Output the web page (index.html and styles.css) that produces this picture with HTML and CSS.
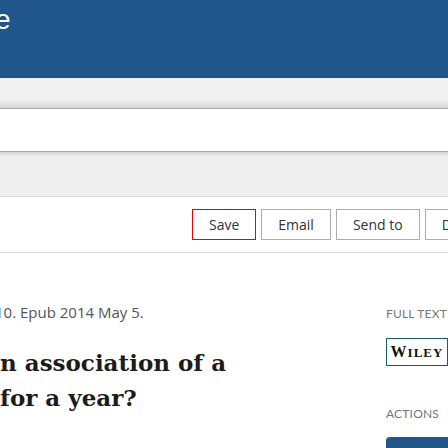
FILE: index.html
```html
<!DOCTYPE html>
<html lang="en">
<head>
<meta charset="utf-8">
<title>Article</title>
<link rel="stylesheet" href="styles.css">
</head>
<body>
<header class="masthead"><span class="brand">e</span></header>
<div class="searchbar"></div>
<div class="toolbar"></div>
<div class="actions-row">
  <button class="btn btn-active">Save</button>
  <button class="btn">Email</button>
  <button class="btn">Send to</button>
  <button class="btn">Display options</button>
</div>
<hr class="rule">
<main class="content">
  <article class="main-col">
    <p class="citation">10. Epub 2014 May 5.</p>
    <h1 class="title">n association of a<br>for a year?</h1>
  </article>
  <aside class="side-col">
    <h2 class="side-heading">Full text</h2>
    <a class="publisher" href="#"><span class="publisher-name">Wiley</span></a>
    <h2 class="side-heading actions-heading">Actions</h2>
    <button class="cite-btn" aria-label="Cite"></button>
  </aside>
</main>
</body>
</html>
```
FILE: styles.css
```css
html, body {
  margin: 0;
  padding: 0;
  width: 448px;
  height: 448px;
  overflow: hidden;
  background: #fff;
}
body {
  font-family: "Open Sans", sans-serif;
}
.masthead {
  height: 78px;
  box-sizing: border-box;
  padding-top: 4px;
  background: #205689;
  overflow: hidden;
}
.brand {
  display: block;
  margin-left: -5px;
  color: #fff;
  font: 28px/32px "Liberation Sans", Arial, sans-serif;
}
.searchbar {
  height: 30px;
  background: linear-gradient(#f0f0f0 0, #f0f0f0 75%, #d4d4d4 100%);
  border-bottom: 1px solid #aaa;
}
.toolbar {
  margin-top: 42px;
  height: 44px;
  border-top: 1px solid #a8a8a8;
  border-bottom: 1px solid #d9d9d9;
  background: linear-gradient(#d6d6d6, #efefef 5px, #efefef);
}
.actions-row {
  display: flex;
  gap: 5px;
  margin-top: 12px;
  padding-left: 192px;
  overflow: hidden;
}
.btn {
  flex: none;
  height: 31px;
  margin: 0;
  padding: 0 16px;
  box-sizing: border-box;
  border: 1px solid #adadad;
  background: #fff;
  color: #2f3337;
  font: 14px/29px "Open Sans", sans-serif;
}
.btn-active {
  border-color: #e8000b;
}
.rule {
  margin: 12px 0 0;
  height: 0;
  border: 0;
  border-top: 1px solid #d9d9d9;
}
.content {
  display: grid;
  grid-template-columns: 386px 62px;
  align-items: start;
  padding-top: 49px;
}
.citation {
  margin: 0 0 0 -5px;
  color: #555;
  font: 15px/20px "Open Sans", sans-serif;
  white-space: nowrap;
}
.title {
  margin: 23px 0 0;
  color: #1c1c1c;
  font: bold 23px/35px "DejaVu Serif", serif;
  white-space: nowrap;
}
.side-col {
  display: flex;
  flex-direction: column;
  padding-top: 4px;
}
.side-heading {
  margin: 0;
  color: #767676;
  font: 400 12px/16px Lato, sans-serif;
  letter-spacing: 0.2px;
  text-transform: uppercase;
  white-space: nowrap;
}
.publisher {
  display: flex;
  align-items: center;
  justify-content: center;
  height: 28px;
  margin-top: 16px;
  box-sizing: border-box;
  border: 1px solid #13625c;
  color: #111;
  text-decoration: none;
}
.publisher-name {
  display: inline-block;
  font: bold 13px/16px "Liberation Serif", serif;
  letter-spacing: 1px;
  text-transform: uppercase;
}
.publisher-name::first-letter {
  font-size: 16px;
}
.actions-heading {
  margin-top: 40px;
}
.cite-btn {
  height: 24px;
  margin-top: 15px;
  border: 0;
  border-radius: 4px 0 0 0;
  background: #205689;
}
```
